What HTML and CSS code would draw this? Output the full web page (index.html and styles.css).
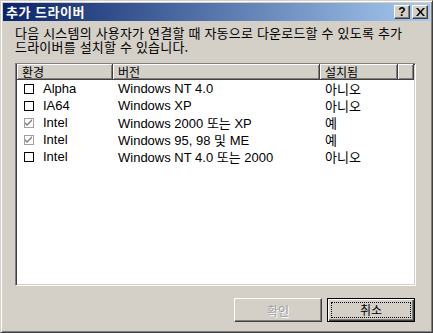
FILE: index.html
```html
<!DOCTYPE html>
<html lang="ko">
<head>
    <meta charset="UTF-8">
    <title>추가 드라이버</title>
    <link rel="stylesheet" href="styles.css">
</head>
<body>
    <div class="window">
        <div class="titlebar">
            <span class="title">추가 드라이버</span>
            <div class="caption-btns">
                <span class="cap-btn">?</span>
                <span class="cap-btn close">
                    <svg width="9" height="8" viewBox="0 0 9 8"><path d="M0 0h2l2.5 3 2.5-3h2L5.5 4 9 8H7L4.5 5 2 8H0l3.5-4z" fill="#000"/></svg>
                </span>
            </div>
        </div>
        <div class="content">
            <p class="desc">다음 시스템의 사용자가 연결할 때 자동으로 다운로드할 수 있도록 추가<br>드라이버를 설치할 수 있습니다.</p>
            <div class="listview">
                <div class="lv-header">
                    <div class="hcell col-env">환경</div>
                    <div class="hcell col-ver">버전</div>
                    <div class="hcell col-inst">설치됨</div>
                    <div class="hcell col-rest"></div>
                </div>
                <div class="lv-row">
                    <div class="cell col-env"><span class="check"></span>Alpha</div>
                    <div class="cell col-ver">Windows NT 4.0</div>
                    <div class="cell col-inst">아니오</div>
                </div>
                <div class="lv-row">
                    <div class="cell col-env"><span class="check"></span>IA64</div>
                    <div class="cell col-ver">Windows XP</div>
                    <div class="cell col-inst">아니오</div>
                </div>
                <div class="lv-row">
                    <div class="cell col-env"><span class="check checked"><svg width="8" height="8" viewBox="0 0 8 8"><path d="M0 3l2 2 5-5v2L2 7 0 5z" fill="#808080"/></svg></span>Intel</div>
                    <div class="cell col-ver">Windows 2000 또는 XP</div>
                    <div class="cell col-inst">예</div>
                </div>
                <div class="lv-row">
                    <div class="cell col-env"><span class="check checked"><svg width="8" height="8" viewBox="0 0 8 8"><path d="M0 3l2 2 5-5v2L2 7 0 5z" fill="#808080"/></svg></span>Intel</div>
                    <div class="cell col-ver">Windows 95, 98 및 ME</div>
                    <div class="cell col-inst">예</div>
                </div>
                <div class="lv-row">
                    <div class="cell col-env"><span class="check"></span>Intel</div>
                    <div class="cell col-ver">Windows NT 4.0 또는 2000</div>
                    <div class="cell col-inst">아니오</div>
                </div>
            </div>
            <div class="buttons">
                <button class="btn" disabled>확인</button>
                <button class="btn btn-default"><span class="focus">취소</span></button>
            </div>
        </div>
    </div>
</body>
</html>
```

FILE: styles.css
```css
body {
    margin: 0;
    background: #D4D0C8;
    font-family: "Noto Sans CJK KR", "Liberation Sans", sans-serif;
    font-size: 12px;
    color: #000;
}
.window {
    width: 433px;
    height: 333px;
    box-sizing: border-box;
    background: #D4D0C8;
    border: 1px solid;
    border-color: #D4D0C8 #404040 #404040 #D4D0C8;
    box-shadow: inset 1px 1px 0 #FFFFFF, inset -1px -1px 0 #808080;
    padding: 2px;
    display: flex;
    flex-direction: column;
}
.titlebar {
    height: 18px;
    background: linear-gradient(90deg, #0A246A, #A6CAF0);
    display: flex;
    align-items: center;
    justify-content: space-between;
    padding: 0 2px 0 3px;
}
.title {
    color: #FFFFFF;
    font-weight: 700;
    font-size: 13px;
    line-height: 18px;
    letter-spacing: 0.5px;
}
.caption-btns {
    display: flex;
    gap: 2px;
}
.cap-btn {
    width: 16px;
    height: 14px;
    box-sizing: border-box;
    background: #D4D0C8;
    border: 1px solid;
    border-color: #FFFFFF #404040 #404040 #FFFFFF;
    box-shadow: inset -1px -1px 0 #808080;
    font-family: "Liberation Sans", sans-serif;
    font-weight: 700;
    font-size: 12px;
    line-height: 12px;
    display: flex;
    align-items: center;
    justify-content: center;
}
.content {
    flex: 1;
    padding: 5px 14px 0 12px;
    display: flex;
    flex-direction: column;
}
.desc {
    margin: 0 0 9px;
    font-size: 13px;
    line-height: 14px;
    letter-spacing: 0.2px;
    white-space: nowrap;
}
.listview {
    height: 223px;
    background: #FFFFFF;
    border: 1px solid;
    border-color: #808080 #FFFFFF #FFFFFF #808080;
    box-shadow: inset 1px 1px 0 #404040, inset -1px -1px 0 #D4D0C8;
    padding: 0 1px;
    margin-bottom: 12px;
    box-sizing: border-box;
}
.lv-header {
    display: flex;
    height: 16px;
}
.hcell {
    background: #D4D0C8;
    box-sizing: border-box;
    border-right: 1px solid #404040;
    border-bottom: 1px solid #404040;
    box-shadow: inset 1px 1px 0 #FFFFFF, inset -1px -1px 0 #808080;
    padding-left: 5px;
    line-height: 15px;
    font-size: 12px;
}
.col-env { width: 96px; }
.col-ver { width: 207px; }
.col-inst { width: 78px; }
.col-rest { flex: 1; }
.lv-row {
    display: flex;
    height: 17px;
    align-items: center;
    font-family: "Liberation Sans", "Noto Sans CJK KR", sans-serif;
    font-size: 13px;
}
.cell {
    padding-left: 5px;
    box-sizing: border-box;
    display: flex;
    align-items: center;
    white-space: nowrap;
}
.check {
    width: 10px;
    height: 10px;
    box-sizing: border-box;
    border: 1px solid #000;
    margin: 0 9px 0 2px;
    display: inline-flex;
    align-items: center;
    justify-content: center;
}
.check.checked {
    border-color: #A0A0A0;
}
.buttons {
    display: flex;
    justify-content: flex-end;
    gap: 5px;
    padding-right: 1px;
}
.btn {
    width: 88px;
    height: 24px;
    background: #D4D0C8;
    border: 1px solid;
    border-color: #FFFFFF #404040 #404040 #FFFFFF;
    box-shadow: inset -1px -1px 0 #808080;
    font-family: "Noto Sans CJK KR", sans-serif;
    font-size: 12px;
    padding: 0;
}
.btn:disabled {
    color: #A0A0A0;
    text-shadow: 1px 1px 0 #FFFFFF;
}
.btn-default {
    border: 1px solid #000;
    box-shadow: inset 1px 1px 0 #FFFFFF, inset -1px -1px 0 #404040, inset -2px -2px 0 #808080;
    padding: 3px;
}
.focus {
    display: block;
    height: 100%;
    border: 1px dotted #000;
    box-sizing: border-box;
    line-height: 14px;
}
```
